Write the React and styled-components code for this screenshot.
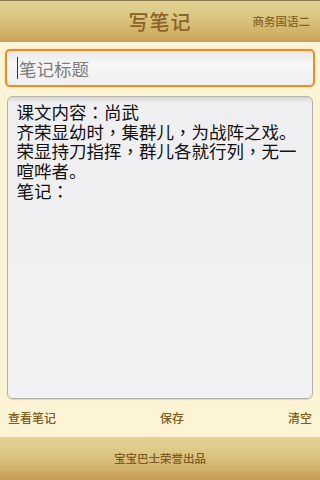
import React from "react";
import styled, { createGlobalStyle } from "styled-components";

const Global = createGlobalStyle`
  html, body { margin: 0; padding: 0; }
  body { font-family: "Noto Sans CJK SC", "Liberation Sans", sans-serif; background: #fdf4d6; }
`;

const Page = styled.div`
  width: 320px;
  height: 480px;
  display: flex;
  flex-direction: column;
  background: #fdf4d6;
  overflow: hidden;
`;

const Header = styled.div`
  height: 43px;
  flex: none;
  position: relative;
  display: flex;
  align-items: center;
  justify-content: center;
  border-top: 1px solid #8c7c52;
  border-bottom: 1px solid #fff6dc;
  background: linear-gradient(#e2d292 0%, #dcc785 35%, #d1b36a 75%, #c8a157 100%);
  box-sizing: border-box;
`;

const Title = styled.div`
  font-size: 20px;
  font-weight: 500;
  color: #8a6422;
  letter-spacing: 1px;
  line-height: 1;
`;

const SubTitle = styled.div`
  position: absolute;
  right: 10px;
  top: 15px;
  font-size: 11.5px;
  font-weight: 500;
  color: #8a6422;
  line-height: 1;
`;

const Body = styled.div`
  flex: 1;
  display: flex;
  flex-direction: column;
  padding: 6px 5px 0 5px;
  gap: 9px;
`;

const TitleInput = styled.div`
  height: 38px;
  box-sizing: border-box;
  border: 2px solid #f28a22;
  border-radius: 5px;
  background: linear-gradient(#e8e8e8, #f7f7f7 40%, #eeeeee);
  display: flex;
  align-items: center;
  padding-left: 10px;
  box-shadow: 0 0 1px #f6b060;
`;

const Caret = styled.span`
  width: 1px;
  height: 22px;
  background: #333;
  margin-right: 1px;
`;

const Placeholder = styled.span`
  font-size: 17.5px;
  color: #7c7c7c;
`;

const NoteArea = styled.div`
  margin: 0 2px;
  height: 303px;
  box-sizing: border-box;
  border: 1px solid #b4b2aa;
  border-radius: 6px;
  background: linear-gradient(#d8d8d8 0px, #efeff1 6px, #f1f1f3 100%);
  padding: 5px 4px 5px 8.5px;
  font-size: 17.5px;
  line-height: 19.7px;
  color: #111;
  box-shadow: 0 1px 1px #d8d0b4;
  text-spacing-trim: space-all;
`;

const Punct = styled.span`
  display: inline-block;
  width: 1em;
  text-align: center;
  font-family: "Noto Sans CJK TC", "Noto Sans CJK SC", sans-serif;
`;

const ActionRow = styled.div`
  display: flex;
  justify-content: space-between;
  padding: 1px 3px 0 3px;
`;

const Action = styled.span`
  font-size: 12px;
  font-weight: 500;
  color: #7c5a20;
`;

const Footer = styled.div`
  height: 43px;
  flex: none;
  display: flex;
  align-items: center;
  justify-content: center;
  background: linear-gradient(#e2d193 0%, #dcc683 40%, #d1b068 75%, #c69c50 100%);
`;

const FooterText = styled.span`
  font-size: 11.5px;
  font-weight: 500;
  color: #7c5a20;
  margin-top: -2px;
`;

export default function App() {
  return (
    <Page>
      <Global />
      <Header>
        <Title>写笔记</Title>
        <SubTitle>商务国语二</SubTitle>
      </Header>
      <Body>
        <TitleInput>
          <Caret />
          <Placeholder>笔记标题</Placeholder>
        </TitleInput>
        <NoteArea>
          课文内容<Punct>：</Punct>尚武
          <br />
          齐荣显幼时<Punct>，</Punct>集群儿<Punct>，</Punct>为战阵之戏。荣显持刀指挥<Punct>，</Punct>群儿各就行列<Punct>，</Punct>无一喧哗者。
          <br />
          笔记<Punct>：</Punct>
        </NoteArea>
        <ActionRow>
          <Action>查看笔记</Action>
          <Action>保存</Action>
          <Action>清空</Action>
        </ActionRow>
      </Body>
      <Footer>
        <FooterText>宝宝巴士荣誉出品</FooterText>
      </Footer>
    </Page>
  );
}
